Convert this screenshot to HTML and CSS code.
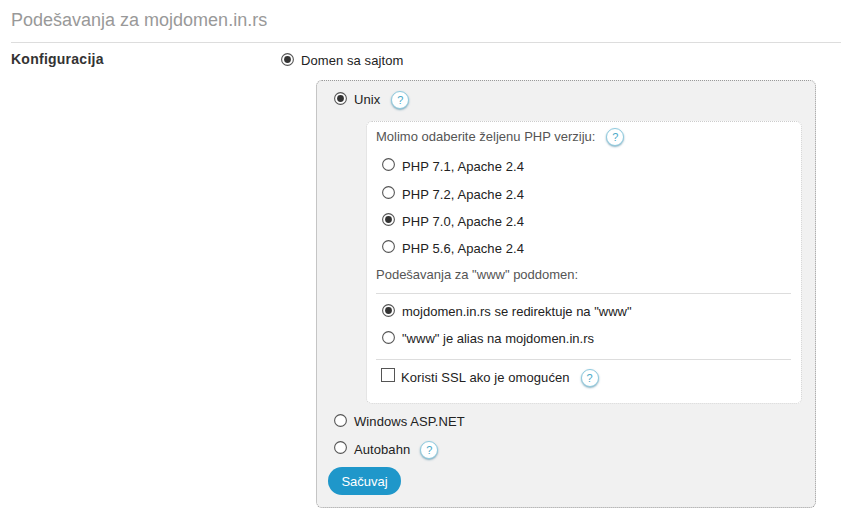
FILE: index.html
```html
<!DOCTYPE html>
<html lang="sr">
<head>
<meta charset="utf-8">
<title>Podešavanja</title>
<link rel="stylesheet" href="styles.css">
</head>
<body>
<svg class="defs" width="0" height="0" aria-hidden="true">
  <symbol id="r-off" viewBox="0 0 13 13"><circle cx="6.5" cy="6.5" r="5.9" fill="#fff" stroke="#555" stroke-width="1.1"/></symbol>
  <symbol id="r-on" viewBox="0 0 13 13"><circle cx="6.5" cy="6.5" r="5.9" fill="#fff" stroke="#555" stroke-width="1.1"/><circle cx="6.5" cy="6.5" r="3.4" fill="#333"/></symbol>
</svg>
<h1 class="title">Podešavanja za mojdomen.in.rs</h1>
<div class="config">
  <div class="config-label">Konfiguracija</div>
  <div class="config-body">
    <div class="row top-row"><svg class="radio"><use href="#r-on"/></svg><span>Domen sa sajtom</span></div>
    <div class="panel">
      <div class="row unix-row"><svg class="radio"><use href="#r-on"/></svg><span>Unix</span><span class="help">?</span></div>
      <div class="inner">
        <div class="caption php-cap"><span>Molimo odaberite željenu PHP verziju:</span><span class="help">?</span></div>
        <div class="opt php first"><svg class="radio"><use href="#r-off"/></svg><span>PHP 7.1, Apache 2.4</span></div>
        <div class="opt php second"><svg class="radio"><use href="#r-off"/></svg><span>PHP 7.2, Apache 2.4</span></div>
        <div class="opt php"><svg class="radio"><use href="#r-on"/></svg><span>PHP 7.0, Apache 2.4</span></div>
        <div class="opt php"><svg class="radio"><use href="#r-off"/></svg><span>PHP 5.6, Apache 2.4</span></div>
        <div class="caption www-cap">Podešavanja za "www" poddomen:</div>
        <div class="opt w1"><svg class="radio"><use href="#r-on"/></svg><span>mojdomen.in.rs se redirektuje na "www"</span></div>
        <div class="opt w2"><svg class="radio"><use href="#r-off"/></svg><span>"www" je alias na mojdomen.in.rs</span></div>
        <div class="opt ssl"><span class="check"></span><span>Koristi SSL ako je omogućen</span><span class="help">?</span></div>
      </div>
      <div class="row win-row"><svg class="radio"><use href="#r-off"/></svg><span>Windows ASP.NET</span></div>
      <div class="row auto-row"><svg class="radio"><use href="#r-off"/></svg><span>Autobahn</span><span class="help">?</span></div>
      <button class="save" type="button">Sačuvaj</button>
    </div>
  </div>
</div>
</body>
</html>
```
FILE: styles.css
```css
html, body { margin: 0; padding: 0; background: #fff; }
body {
  width: 849px;
  height: 514px;
  overflow: hidden;
  font-family: "Liberation Sans", Arial, sans-serif;
  font-size: 13px;
  letter-spacing: 0.08px;
  color: #222;
}
.defs { position: absolute; }
.title {
  margin: 0 8px 0 11px;
  height: 42px;
  border-bottom: 1px solid #ddd;
  font-size: 18px;
  font-weight: normal;
  letter-spacing: 0;
  line-height: 40px;
  color: #999;
}
.config { display: flex; margin-left: 11px; }
.config-label {
  width: 270px;
  padding-top: 7px;
  font-size: 14px;
  font-weight: bold;
  letter-spacing: 0.25px;
  line-height: 18px;
  color: #333;
}
.config-body { width: 535px; }
.row, .opt, .php-cap { display: flex; align-items: center; }
.radio { width: 13px; height: 13px; flex: none; position: relative; top: -1px; }
.php .radio, .auto-row .radio { top: -2px; }
.top-row { height: 20px; margin-top: 7px; }
.top-row span { margin-left: 7px; }
.panel {
  box-sizing: border-box;
  width: 500px;
  height: 428px;
  margin: 10px 0 0 35px;
  padding: 0 13px 0 11px;
  background: #f1f1f1;
  border: 1px dotted #999;
  border-radius: 6px;
}
.unix-row { height: 20px; margin: 8px 0 0 6px; }
.unix-row > span:nth-child(2) { margin-left: 7px; }
.unix-row .help { margin-left: 11px; }
.help {
  box-sizing: border-box;
  width: 18px;
  height: 18px;
  margin-left: 10px;
  border: 1px solid #8fcbdf;
  border-radius: 50%;
  background: #fff;
  box-shadow: 0 1px 2px rgba(40, 110, 140, 0.55);
  color: #4aa9c8;
  font-size: 11px;
  letter-spacing: 0;
  line-height: 16px;
  text-align: center;
  flex: none;
  position: relative;
  top: 1px;
}
.inner {
  box-sizing: border-box;
  width: 436px;
  height: 283px;
  margin: 12px 0 0 38px;
  padding: 0 10px 0 9px;
  background: #fff;
  border: 1px dotted #ccc;
  border-radius: 6px;
}
.caption { color: #555; letter-spacing: 0; }
.php-cap { height: 20px; margin-top: 4px; }
.php-cap .help { margin-left: 11px; }
.opt { height: 27px; padding-left: 6px; }
.opt .radio + span { margin-left: 7px; }
.first { margin-top: 7px; }
.second { margin-top: 1px; }
.www-cap { margin-top: 1px; height: 27px; line-height: 24px; border-bottom: 1px solid #ddd; padding-bottom: 3px; }
.w1 { margin-top: 4px; letter-spacing: 0; }
.w2 { height: 27px; letter-spacing: 0; }
.ssl { border-top: 1px solid #ddd; margin-top: 7px; height: 34px; padding-left: 5px; }
.check {
  width: 12px;
  height: 12px;
  border: 1px solid #555;
  background: #fff;
  margin-right: 6px;
  position: relative;
  top: -2px;
}
.ssl .help { margin-left: 11px; }
.win-row { height: 20px; margin: 7px 0 0 6px; }
.auto-row { height: 20px; margin: 8px 0 0 6px; }
.win-row span, .auto-row > span:nth-child(2) { margin-left: 7px; }
.save {
  display: block;
  width: 73px;
  height: 28px;
  margin: 8px 0 0 0;
  padding: 0;
  border: 0;
  border-radius: 14px;
  background: #1f97ca;
  color: #fff;
  font: 13px "Liberation Sans", Arial, sans-serif;
}
```
